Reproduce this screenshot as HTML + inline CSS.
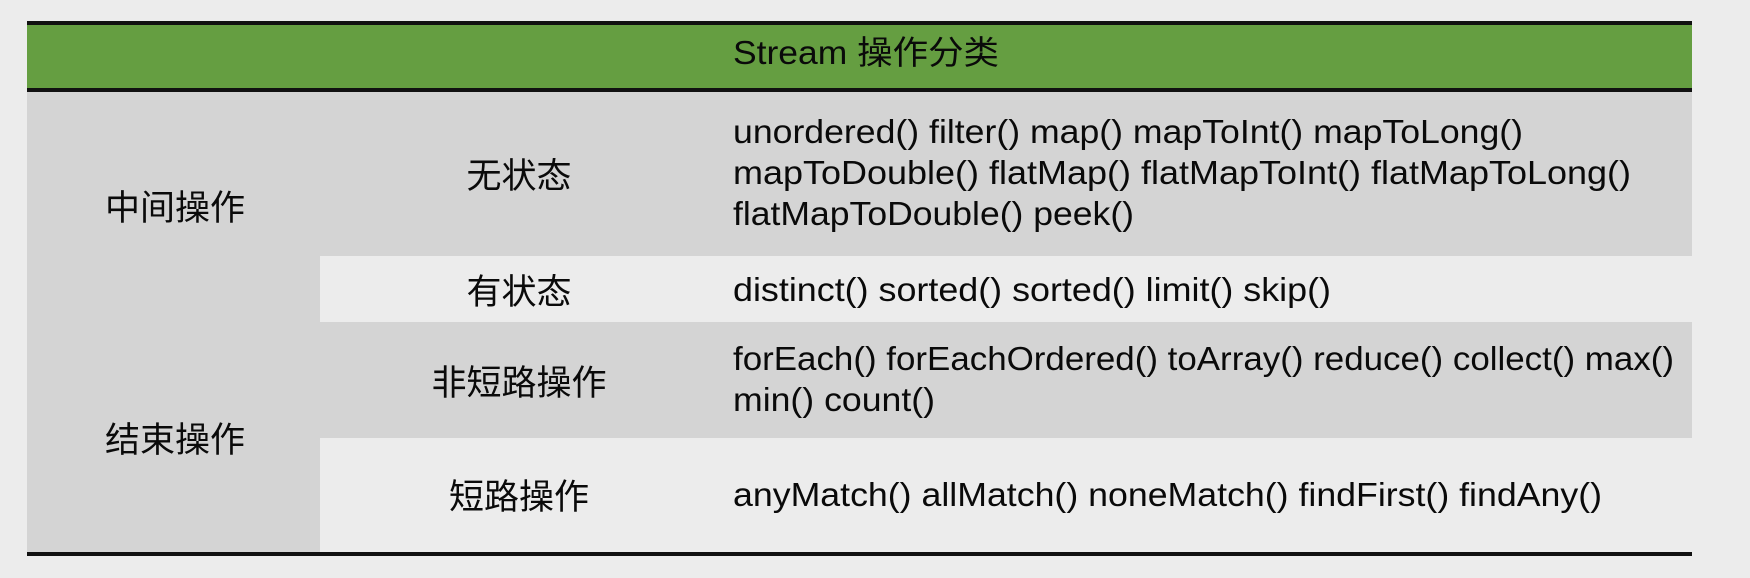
<!DOCTYPE html>
<html><head><meta charset="utf-8"><style>
html,body{margin:0;padding:0;background:#ececec;}
svg{display:block}
text{font-family:"Liberation Sans","Noto Sans CJK SC",sans-serif;fill:#0a0a0a;}
.c{font-family:"Noto Sans CJK SC","Liberation Sans",sans-serif;font-size:35px;text-anchor:middle}
.l{font-size:33px}
</style></head><body>
<svg width="1750" height="578" viewBox="0 0 1750 578" xmlns="http://www.w3.org/2000/svg">
<rect x="0" y="0" width="1750" height="578" fill="#ececec"/>
<rect x="27" y="25" width="1665" height="64" fill="#659e41"/>
<rect x="27" y="21" width="1665" height="4" fill="#111"/>
<rect x="27" y="88" width="1665" height="4" fill="#111"/>
<rect x="27" y="92" width="1665" height="460" fill="#d4d4d4"/>
<rect x="320" y="256" width="1372" height="66" fill="#ececec"/>
<rect x="320" y="438" width="1372" height="114" fill="#ececec"/>
<rect x="27" y="552" width="1665" height="4" fill="#111"/>

<text class="l" x="733" y="64" textLength="266" lengthAdjust="spacingAndGlyphs">Stream 操作分类</text>

<text class="c" x="175" y="220">中间操作</text>
<text class="c" x="175" y="452">结束操作</text>
<text class="c" x="519" y="188">无状态</text>
<text class="c" x="519" y="304">有状态</text>
<text class="c" x="519" y="395">非短路操作</text>
<text class="c" x="519" y="509">短路操作</text>

<text class="l" x="733" y="143" textLength="790" lengthAdjust="spacingAndGlyphs">unordered() filter() map() mapToInt() mapToLong()</text>
<text class="l" x="733" y="184" textLength="898" lengthAdjust="spacingAndGlyphs">mapToDouble() flatMap() flatMapToInt() flatMapToLong()</text>
<text class="l" x="733" y="225" textLength="401" lengthAdjust="spacingAndGlyphs">flatMapToDouble() peek()</text>
<text class="l" x="733" y="301" textLength="598" lengthAdjust="spacingAndGlyphs">distinct() sorted() sorted() limit() skip()</text>
<text class="l" x="733" y="370" textLength="941" lengthAdjust="spacingAndGlyphs">forEach() forEachOrdered() toArray() reduce() collect() max()</text>
<text class="l" x="733" y="411" textLength="202" lengthAdjust="spacingAndGlyphs">min() count()</text>
<text class="l" x="733" y="506" textLength="869" lengthAdjust="spacingAndGlyphs">anyMatch() allMatch() noneMatch() findFirst() findAny()</text>
</svg>
</body></html>
